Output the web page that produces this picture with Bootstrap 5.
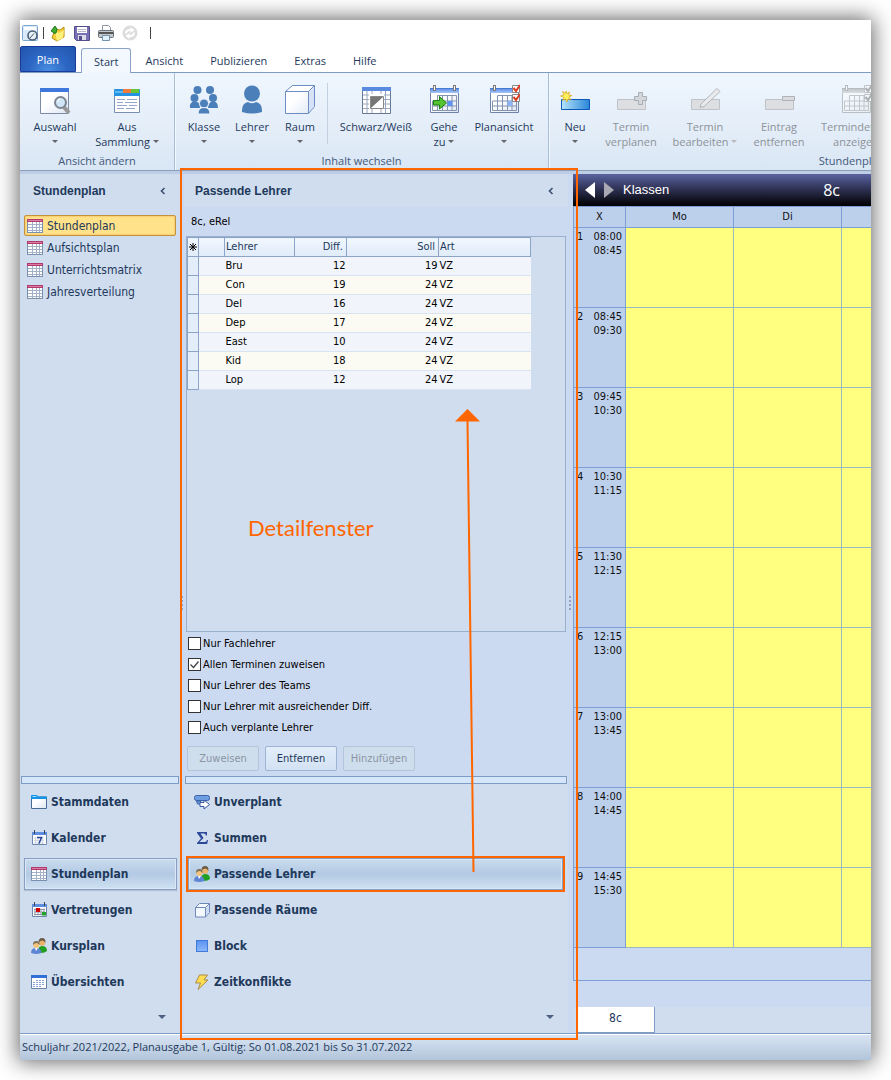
<!DOCTYPE html>
<html lang="de">
<head>
<meta charset="utf-8">
<meta name="viewport" content="width=device-width, initial-scale=1">
<title>Stundenplan – Passende Lehrer</title>
<link href="https://cdn.jsdelivr.net/npm/bootstrap@5.3.0/dist/css/bootstrap.min.css" rel="stylesheet">
<style>
:root{--ink:#1e395b;--panel:#d0ddee;--back:#ccdaf1;--edge:#7f9cc4;--mark-line:#ff6600;
  --ui:"DejaVu Sans Condensed","DejaVu Sans",sans-serif;--ribbon:"Open Sans","Noto Sans",sans-serif}
body{background:#fff;padding:20px;color:var(--ink);font-family:var(--ui);font-size:11px;line-height:14px}
button,a{color:inherit;text-decoration:none}
.app-window{min-height:calc(100vh - 40px);box-shadow:0 0 20px 2px rgba(0,0,0,.6);background:var(--back);overflow:hidden}
svg{display:block;flex:none}
/* quick access bar */
.quickbar{height:26px;padding:0 2px;gap:7px;background:#fff}
.quickbar button{border:0;background:none;padding:0;width:17px;height:17px}
.quickbar .tick{width:1px;height:12px;background:#444}
.quickbar .tick.near{margin:0 -1px 0 -3px}
.quickbar .tick.far{margin-left:4px}
/* ribbon tabs */
.tabstrip{height:27px;background:#fff;border-bottom:1px solid #7c9cc3;font-family:var(--ribbon);font-size:11px;gap:1px}
.tabstrip .tab-link{padding:7px 13px 4px;border:0;background:none;line-height:16px;height:25px;display:flex;align-items:center}
.tabstrip .tab-file{width:56px;height:26px;padding:2px 0 0;margin:0 4px 0 0;color:#fff;text-align:center;border:1px solid #173c9b;border-radius:2px 2px 0 0;
  background:radial-gradient(ellipse at 50% 100%,#4a90e2 0,#2c66c4 50%,#2355ad 100%)}
.tabstrip .tab-link.active{background:#f3f8fe;border:1px solid #8ba5c9;border-bottom:0;border-radius:3px 3px 0 0;padding:6px 12px 5px;height:25px;margin-bottom:-1px}
/* ribbon */
.ribbon{height:98px;background:linear-gradient(#eff6fe,#e3edf8 60%,#d9e6f4);font-family:var(--ribbon);font-size:11px;border-bottom:1px solid #879fbd;overflow:hidden}
.ribbon-group{border-right:1px solid #a7bcd6;box-shadow:1px 0 #f4f9ff;padding:10px 5px 0;flex:none}
.ribbon-group.first{width:155px}
.ribbon-group.middle{width:374px}
.ribbon-group.wide{padding-left:2px;width:668px}
.ribbon-btn{border:0;background:none;padding:0;line-height:15px;width:48px;height:67px;flex:none}
.ribbon-btn svg{margin:0 auto 3px}
.ribbon-btn:disabled{color:#8d9299}
.ribbon-btn.w60{width:60px}.ribbon-btn.w84{width:84px}.ribbon-btn.w90{width:90px}.ribbon-btn.w46{width:46px}.ribbon-btn.w74{width:74px}
.ribbon-btn.w64{width:64px}
.ribbon-sep{width:1px;height:61px;background:#c3d0e0;margin:0 3px}
.group-label{text-align:center;line-height:16px;color:#41597c;margin-top:3px}
.caret{display:inline-block;border:3px solid transparent;border-top-color:#666;border-bottom:0;vertical-align:3px}
:disabled .caret{border-top-color:#bbb}
.main-area{border-top:3px solid #bccde4}
/* side columns */
.nav-col{width:160px;background:var(--panel);flex:none}
.detail-col{width:384px;background:var(--back);flex:none;position:relative}
.panel-head{height:33px;font:bold 12px/16px "Liberation Sans",Arial,sans-serif;padding:0 13px 0 11px;background:var(--panel)}
.nav-col .panel-head{padding-left:13px}
.panel-head button{border:0;background:none;padding:0}
.splitter{width:5px;flex:none;background:var(--back);position:relative}
.splitter.slim{width:4px}
.grip{width:2px;height:14px;background:repeating-linear-gradient(#8fa3c0 0 2px,transparent 2px 4px);position:absolute;left:1px;top:422px}
.view-link{height:22px;font-size:12px;line-height:16px;padding:0 2px;gap:4px;border:1px solid transparent;border-radius:2px}
.view-link.active{background:#ffe28a;border-color:#c5923c;box-shadow:inset 0 0 2px #e9a94a;height:21px;margin-bottom:1px}
.bar{height:8px;border:1px solid var(--edge);background:#d5e6fa;flex:none;margin:0 1px}
.area-link{height:32px;margin:0 3px 0 4px;padding:0 6px;gap:4px;font-size:12px;line-height:16px;font-weight:700;border:1px solid transparent}
.area-list{gap:4px;padding:2px 0}
.area-link.active{border-color:#86a0c4;box-shadow:inset 0 0 0 1px #d9e7f6,0 1px 1px #b4c2d6;background:linear-gradient(#c9dbee,#b3cae4 50%,#cfe1f2)}
.detail-areas{background:var(--panel)}
.detail-areas .area-link{margin-left:4px;margin-right:5px;padding-left:5px}
.detail-areas .area-link.active{outline:2px solid var(--mark-line)}
.area-foot{height:33px;padding:12px 14px 0}
.area-foot .caret{border-width:4px 4px 0;border-top-color:#4c5f80}
/* teacher table */
.lesson{height:29px;color:#000;padding:8px 7px 0}
.list-box{margin:0 2px;border:1px solid #9bb0cd;background:var(--panel)}
.teachers{width:344px;table-layout:fixed;border-collapse:collapse;color:#000}
.teachers th{height:19px;padding:0 1px;font-weight:400;color:var(--ink);background:linear-gradient(#f1f7fe,#dfebf9);border:1px solid #8ba4c8}
.teachers td{height:19px;padding:0 1px;background:#f1f5fb;border-bottom:1px solid #d8e4f2}
.teachers tr:nth-child(even) td{background:#fbfbf3}
.teachers tr td:first-child{background:#e4eefa;border:1px solid #8ba4c8}
.teachers .star{color:#000;text-align:center;padding:0}
.teachers .num{text-align:right}
.teachers th.num{padding-right:3px}
.options{padding:1px 4px 0;color:#000}
.options .form-check{min-height:0;height:21px;padding:0;margin:0;gap:2px}
.options .form-check-input{width:13px;height:13px;margin:0;float:none;border:1px solid #333;border-radius:0;background-color:#fff}
.options .form-check-input:checked{background-color:#fff;background-image:url("data:image/svg+xml,%3Csvg xmlns='http://www.w3.org/2000/svg' viewBox='0 0 11 11'%3E%3Cpath d='M1.5 5.5l3 3 5-6' fill='none' stroke='%23444' stroke-width='1.3'/%3E%3C/svg%3E")}
.actions{padding:8px 3px 5px;gap:6px}
.actions .btn{width:72px;height:25px;padding:0;font-size:11px;line-height:14px;color:var(--ink);border:1px solid #9fb4d2;border-radius:2px;background:linear-gradient(#e3eefa,#d2e1f3)}
.actions .btn:disabled{color:#8b95a3;border-color:#b4c5da;background:#cfdeed;opacity:1}
/* call-outs drawn over the window */
.callout-frame{position:absolute;inset:-6px -10px -7px -4px;border:2px solid var(--mark-line);pointer-events:none;z-index:3}
.callout-text{position:absolute;left:64px;top:340px;font:22px/28px Lato,"Open Sans",sans-serif;color:var(--mark-line)}
.callout-arrow{position:absolute;left:271px;top:235px;z-index:3;pointer-events:none}
/* timetable */
.plan-col{min-width:0;overflow:hidden}
.plan-head{height:32px;background:linear-gradient(#5a64a2,#35395f 40%,#000);color:#fff;font:13px/16px "Liberation Sans",Arial,sans-serif;padding:0 12px}
.plan-head button{border:0;background:none;padding:0;width:19px}
.plan-head .class-name{font:16px/20px var(--ribbon);margin-left:auto;margin-right:19px}
.plan-box{border:1px solid #7d9fd6;border-width:0 0 1px 1px;overflow:hidden;padding-bottom:32px}
.plan{width:592px;table-layout:fixed;border-collapse:separate;border-spacing:0;color:#111}
.plan th{font-weight:400;padding:0;background:#bdd0eb}
.plan thead th{height:22px;text-align:center;border:1px solid #7d9fd6;border-width:1px 1px 1px 0}
.plan tbody th{height:80px;vertical-align:top;padding:2px 3px 0;border:1px solid #7d9fd6;border-width:0 1px 1px 0}
.plan tbody td{background:#ffff80;border:1px solid #9db8c0;border-width:0 1px 1px 0}
.sheets{height:26px;background:var(--panel);margin-top:auto}
.sheets button{width:78px;height:26px;margin-left:4px;border:1px solid #7f9cc4;border-width:0 1px 1px 0;background:#fff;font-size:12px;padding:0 0 4px}
.statusbar{height:27px;border-top:1px solid #7f9cc4;box-shadow:inset 0 1px #fff;background:linear-gradient(#d9e5f3,#b2c5db);font:11px/26px var(--ribbon);padding:0 2px}
</style>
</head>
<body>
<svg width="0" height="0" class="position-absolute" aria-hidden="true">
  <defs>
    <linearGradient id="gBlue" x1="0" y1="0" x2="1" y2="0"><stop offset="0" stop-color="#b5e4fb"/><stop offset="1" stop-color="#2a86d8"/></linearGradient>
    <linearGradient id="gPage" x1="0" y1="0" x2="1" y2="1"><stop offset=".4" stop-color="#fff"/><stop offset="1" stop-color="#dde6f4"/></linearGradient>
    <linearGradient id="gHead" x1="0" y1="0" x2="0" y2="1"><stop offset="0" stop-color="#4f86e6"/><stop offset="1" stop-color="#a9c6f6"/></linearGradient>
    <linearGradient id="gBlock" x1="0" y1="0" x2="0" y2="1"><stop offset="0" stop-color="#5b93f2"/><stop offset="1" stop-color="#8db8fb"/></linearGradient>
  </defs>
  <symbol id="grid-red" viewBox="0 0 16 16"><rect x=".5" y="1.5" width="15" height="13" fill="#fff" stroke="#7b8fae"/><path d="M1 6.500h14M1 9.500h14M1 12.500h14M5.500 4v10M9.500 4v10M12.500 4v10" stroke="#a3b1c8"/><path d="M0 1h16v3H0z" fill="#b03a6c"/><path d="M1 2.500h14" stroke="#db7ba2"/></symbol>
  <symbol id="folder" viewBox="0 0 16 16"><path d="M.5 14.500V2.500q0-1 1-1h4l1 1.500h9v11.500z" fill="url(#gPage)" stroke="#4a6c94"/><path d="M0 5V2q0-1 1-1h5l1 1.500h9V5z" fill="#1593e6"/><path d="M1.500 2.500h4" stroke="#9fdcff"/></symbol>
  <symbol id="cal7" viewBox="0 0 16 16"><path d="M1.500 2.500h14v12h-14z" fill="#fff" stroke="#6d86ab"/><path d="M1 2h15v3H1z" fill="#5d8ee0"/><path d="M3.500 0v4M13.500 0v4" stroke="#444"/><path d="M3 8h10M3 10.500h10M3 13h10M4.500 7v7M7 7v7M11.500 7v7" stroke="#d0d8e4"/><path d="M6 7.500h4.500L8 13.500" fill="none" stroke="#28479a" stroke-width="1.500"/></symbol>
  <symbol id="calred" viewBox="0 0 16 16"><path d="M1.500 2.500h14v12h-14z" fill="#fff" stroke="#6d86ab"/><path d="M1 2h15v3H1z" fill="#5d8ee0"/><path d="M3.500 0v4M13.500 0v4" stroke="#444"/><path d="M3 7.500h11M3 10h11M3 12.500h11M4 6.500v7M7 6.500v7M10 6.500v7M13 6.500v7" stroke="#8a94a6"/><path d="M5 6h4v4H5z" fill="#d40000"/><path d="M11 10h4v3.500h-4z" fill="#1fa52a"/></symbol>
  <symbol id="people" viewBox="0 0 16 16"><path d="M7 14q0-6 4-6 5 0 5 5-2 2-6 2z" fill="#22a022"/><circle cx="11" cy="4.500" r="3.200" fill="#e9b36c"/><path d="M7.600 4.500q-.2-4.500 3.400-4.500 4 0 3.400 5-1-2.500-3-2.500-2 .2-3.800 2z" fill="#6b5a44"/><path d="M0 15q0-5 5-5t5.500 5q-5 2-10.500 0z" fill="#5f86d4"/><path d="M4 10l1 3 2-3z" fill="#fff"/><circle cx="5.300" cy="7" r="3" fill="#f5c27a"/><path d="M2 7Q1.700 3 5.300 3q3.700 0 3.300 4-1.500-2-3.300-2-1.600 0-3.300 2z" fill="#7a705c"/></symbol>
  <symbol id="overview" viewBox="0 0 16 16"><path d="M.5 2.500h15v12H.5z" fill="#fff" stroke="#6b84a6"/><path d="M0 1h16v3H0z" fill="#2f6fd6"/><path d="M5 6.500h9M2 8.500h12M2 10.500h12M2 12.500h8" stroke="#8ba4d8" stroke-dasharray="2 1"/></symbol>
  <symbol id="unplanned" viewBox="0 0 16 16"><rect x=".5" y="1.500" width="15" height="5" rx="2" fill="#6f9ee0" stroke="#3b62a8"/><path d="M2.500 7h4v3h-3z" fill="#6f9ee0" stroke="#3b62a8"/><path d="M6 8.500h4V6l5.500 4.500L10 15v-2.500H6z" fill="#fff" stroke="#3a56a0"/></symbol>
  <symbol id="sigma" viewBox="0 0 16 16"><path d="M3 2h10v3.500h-1Q11.500 3.500 10 3.500H6.500L9.500 8l-4 4H11q1.500 0 2-2h1l-.8 4H3v-1l4-4.500L3 3z" fill="#2d4a9a"/></symbol>
  <symbol id="cube" viewBox="0 0 16 16"><path d="M1.500 5.500l4-4h10v9l-4 4.500h-10z" fill="#f4f8ff" stroke="#6c89ba"/><path d="M1.500 5.500h10v9.500M11.500 5.500l4-4" fill="none" stroke="#6c89ba"/><path d="M12 6l3-3v7l-3 4z" fill="#ccdaf4"/></symbol>
  <symbol id="block" viewBox="0 0 16 16"><rect x="2.500" y="2.500" width="11" height="11" fill="url(#gBlock)" stroke="#4179d8"/></symbol>
  <symbol id="bolt" viewBox="0 0 16 16"><path d="M5.500 1h8L10 6h4L4 15.500 6.500 9H1.500z" fill="#ffdc50" stroke="#a98b4d"/></symbol>
  <symbol id="calbig" viewBox="0 0 32 32"><path d="M2.500 4.500h28v24h-28z" fill="url(#gPage)" stroke="#6f85a8"/><path d="M3 4h28v5H2z" fill="url(#gHead)"/><path d="M2 4.500h29" stroke="#4a7bd4"/><rect x="5.500" y="1.500" width="2" height="5" fill="#fff" stroke="#777"/><rect x="25.500" y="1.500" width="2" height="5" fill="#fff" stroke="#777"/><path d="M4.500 17v9.500h24v-15h-19V26M4.500 17h24M4.500 22h24M14.500 12v14M19.500 12v14M24 12v14" fill="none" stroke="#8493ae"/></symbol>
  <symbol id="checks" viewBox="0 0 32 32"><path d="M24.500 1.500h7v7h-7zM24.500 10.500h7v7h-7z" fill="#fff" stroke="#888"/><path d="M25.500 4l2.500 3 4-6M25.500 13l2.500 3 4-6" fill="none" stroke="#e23b22" stroke-width="2"/></symbol>
  <symbol id="slab" viewBox="0 0 32 32"><path d="M2.500 15.500h28v10h-28z" fill="#dcdee2" stroke="#bfc3c8"/></symbol>
</svg>

<div class="app-window d-flex flex-column">
  <header>
    <div class="quickbar d-flex align-items-center">
      <button aria-label="Vorschau"><svg width="17" height="17" viewBox="0 0 17 17"><rect x=".5" y=".5" width="15" height="15" rx="1" fill="#d9ebfb" stroke="#7ba6d0"/><path d="M2 2h12v3H2z" fill="#fff"/><circle cx="10.500" cy="10.500" r="4.500" fill="#e6f1fb" stroke="#4b5c75" stroke-width="1.600"/><path d="M8 13l4-4.500" stroke="#556"/></svg></button>
      <span class="tick near"></span>
      <button aria-label="Öffnen"><svg width="17" height="17" viewBox="0 0 17 17"><path d="M5 4l5 1 4-3v10l-7 4-5-3z" fill="#f3cf3c" stroke="#b98f14"/><path d="M5 6l4 2 5-3-1 8-6 3z" fill="#fff07c"/><path d="M1 6l4-5 2 3-1 4q-3 1-3-1z" fill="#3daa34" stroke="#23791f"/></svg></button>
      <button aria-label="Speichern"><svg width="17" height="17" viewBox="0 0 17 17"><path d="M.5 1.500h15v14h-13l-2-2z" fill="#7770b4" stroke="#544d8c"/><path d="M3 2h10v6H3z" fill="#fff"/><path d="M4 4.500h8M4 6.500h8" stroke="#b6b6c8"/><path d="M4 10h8v5H4z" fill="#dcdce8"/><path d="M5 11h3v4H5z" fill="#544d8c"/></svg></button>
      <button aria-label="Drucken"><svg width="17" height="17" viewBox="0 0 17 17"><path d="M4.500 6V.5h6l2 2V6" fill="#fff" stroke="#8a94a0"/><rect x=".5" y="5.500" width="15" height="7" rx="1" fill="#c3c8cc" stroke="#6b747c"/><path d="M1 8h14" stroke="#555" stroke-width="2"/><path d="M4.500 10.500h7v5h-7z" fill="#e1f1fc" stroke="#7492aa"/></svg></button>
      <button disabled aria-label="Aktualisieren"><svg width="17" height="17" viewBox="0 0 17 17"><circle cx="8" cy="8" r="7.500" fill="#dcdcdc"/><path d="M4 8.500Q4 5 8 5h1M12 7.500Q12 11 8 11H7" fill="none" stroke="#fff" stroke-width="2"/><path d="M8.500 2l4 3-4 3zM7.500 8l-4 3 4 3z" fill="#fff"/></svg></button>
      <span class="tick far"></span>
    </div>
    <nav class="tabstrip d-flex align-items-end">
      <button class="tab-file">Plan</button>
      <button class="tab-link active">Start</button>
      <button class="tab-link">Ansicht</button>
      <button class="tab-link">Publizieren</button>
      <button class="tab-link">Extras</button>
      <button class="tab-link">Hilfe</button>
    </nav>
    <div class="ribbon d-flex">
      <section class="ribbon-group first">
        <div class="d-flex align-items-start">
          <button class="ribbon-btn w60"><svg width="32" height="32" viewBox="0 0 32 32"><path d="M1.500 4.500h28v25h-28z" fill="url(#gPage)" stroke="#7b8ba4"/><path d="M1 4h29v4H1z" fill="#3f78dc"/><path d="M24 22l6 7" stroke="#999" stroke-width="4"/><circle cx="21.500" cy="18.500" r="5.500" fill="#cfe6f8" stroke="#7d8592" stroke-width="2"/><path d="M18.500 18q.5-3 3-3" stroke="#fff" fill="none"/></svg>Auswahl<br><span class="caret"></span></button>
          <button class="ribbon-btn w84"><svg width="32" height="32" viewBox="0 0 32 32"><path d="M3.500 7.500h25v21h-25z" fill="#fff" stroke="#7890ae"/><path d="M3 12V6q0-1 1-1h24q1 0 1 1v6z" fill="#2593e2"/><path d="M12 5h8v4h-8z" fill="#f07a3c"/><path d="M20 5h8v4h-8z" fill="#68c636"/><path d="M4 8h8" stroke="#9be0ff"/><path d="M6 15.500h8m2 0h10M6 18.500h6m2 0h12M6 21.500h10m2 0h8M6 24.500h7m2 0h9" stroke="#96a7cd"/></svg>Aus<br>Sammlung <span class="caret"></span></button>
        </div>
        <div class="group-label">Ansicht ändern</div>
      </section>
      <section class="ribbon-group middle">
        <div class="d-flex align-items-start">
          <button class="ribbon-btn"><svg width="32" height="32" viewBox="0 0 32 32" fill="#4b7fba"><circle cx="9.500" cy="6" r="4"/><circle cx="22" cy="6" r="4"/><circle cx="6.500" cy="14" r="4"/><circle cx="25" cy="14" r="4"/><path d="M2 24q-1-6 4.500-6.500T12 24zM20 24q0-6 5-6.500T30 24z"/><g stroke="#eaf2fb"><circle cx="16" cy="19.500" r="4.500"/><path d="M10 30q0-6.500 6-6.500t6 6.500z"/></g></svg>Klasse<br><span class="caret"></span></button>
          <button class="ribbon-btn"><svg width="32" height="32" viewBox="0 0 32 32" fill="#4b7fba"><circle cx="16" cy="9.500" r="8"/><path d="M6 28q-.5-9 6-10 4 2.500 8 0 6.500 1 6 10-10 3-20 0z"/></svg>Lehrer<br><span class="caret"></span></button>
          <button class="ribbon-btn"><svg width="32" height="32" viewBox="0 0 32 32"><path d="M1.500 7.500l7-6h22v21l-6 7h-23z" fill="url(#gPage)" stroke="#6d8cc4"/><path d="M25 8l5-5v19l-5 6z" fill="#d6e2f8"/><path d="M1.500 7.500h23v22M24.500 7.500l6-6" fill="none" stroke="#6d8cc4"/></svg>Raum<br><span class="caret"></span></button>
          <span class="ribbon-sep"></span>
          <button class="ribbon-btn w90"><svg width="32" height="32" viewBox="0 0 32 32"><path d="M2.500 3.500h28v26h-28z" fill="#fff" stroke="#667a98"/><path d="M2 3h29v4H2z" fill="#5a8ae0"/><path d="M3 11h27M3 15.500h27M3 20h27M3 24.500h27M7 7v22M12 7v22M21 7v22M25.500 7v22" stroke="#9aa8bd"/><path d="M9 10h15v15H9z" fill="#fff"/><path d="M10.500 12.500h13v12h-13z" fill="#fff" stroke="#888"/><path d="M11 13h12L11 24z" fill="#777"/></svg>Schwarz/Weiß<br>&nbsp;</button>
          <button class="ribbon-btn w46"><svg width="32" height="32" viewBox="0 0 32 32"><use href="#calbig"/><path d="M19.500 17h5v5h-5z" fill="#5d93ee"/><path d="M5.500 16.500h6v-4l7 6.500-7 6v-4h-6z" fill="#53c42f" stroke="#1d7d16"/></svg>Gehe<br>zu <span class="caret"></span></button>
          <button class="ribbon-btn w74"><svg width="32" height="32" viewBox="0 0 32 32"><use href="#calbig"/><path d="M19.500 17h5v5h-5z" fill="#8db4f4"/><use href="#checks"/></svg>Planansicht<br><span class="caret"></span></button>
        </div>
        <div class="group-label">Inhalt wechseln</div>
      </section>
      <section class="ribbon-group wide">
        <div class="d-flex align-items-start">
          <button class="ribbon-btn"><svg width="32" height="32" viewBox="0 0 32 32"><path d="M2.500 15.500h28v10h-28z" fill="url(#gBlue)" stroke="#0c58b8"/><path d="M7 7l.8 2.700L10.500 8l-1 3 3.500.5-3 1.500 2 3-3-1-1 3-1.500-3-3 1.500L5 13.500 1.500 12 5 11 3.500 7.500 6.300 9.300z" fill="#fff25a" stroke="#d9a21c" stroke-width=".7"/></svg>Neu<br><span class="caret"></span></button>
          <button class="ribbon-btn w64" disabled><svg width="32" height="32" viewBox="0 0 32 32"><use href="#slab"/><path d="M23.500 8.500h4v4h4v4h-4v4h-4v-4h-4v-4h4z" fill="#d3d6da" stroke="#a9aeb4"/></svg>Termin<br>verplanen</button>
          <button class="ribbon-btn w84" disabled><svg width="32" height="32" viewBox="0 0 32 32"><use href="#slab"/><path d="M12 20L28 4.500l3 3L15 22.500l-4 1z" fill="#e9eaec" stroke="#b1b5ba"/></svg>Termin<br>bearbeiten <span class="caret"></span></button>
          <button class="ribbon-btn w64" disabled><svg width="32" height="32" viewBox="0 0 32 32"><use href="#slab"/><path d="M19.500 12.500h12v4h-12z" fill="#d9dbde" stroke="#aeb2b7"/></svg>Eintrag<br>entfernen</button>
          <button class="ribbon-btn w90" disabled><svg width="32" height="32" viewBox="0 0 32 32" style="filter:grayscale(1) opacity(.45)"><use href="#calbig"/><use href="#checks"/></svg>Termindetails<br>anzeigen</button>
        </div>
        <div class="group-label">Stundenplan bearbeiten</div>
      </section>
    </div>
  </header>

  <main class="main-area d-flex flex-grow-1">
    <aside class="nav-col d-flex flex-column">
      <div class="panel-head d-flex align-items-center justify-content-between"><span>Stundenplan</span><button aria-label="Einklappen"><svg width="8" height="8" viewBox="0 0 8 8"><path d="M5.500 1L2.500 4l3 3" fill="none" stroke="#3c4f70" stroke-width="1.600"/></svg></button></div>
      <nav class="flex-grow-1 px-1 pt-2">
        <a href="#" class="view-link active d-flex align-items-center"><svg width="16" height="16"><use href="#grid-red"/></svg>Stundenplan</a>
        <a href="#" class="view-link d-flex align-items-center"><svg width="16" height="16"><use href="#grid-red"/></svg>Aufsichtsplan</a>
        <a href="#" class="view-link d-flex align-items-center"><svg width="16" height="16"><use href="#grid-red"/></svg>Unterrichtsmatrix</a>
        <a href="#" class="view-link d-flex align-items-center"><svg width="16" height="16"><use href="#grid-red"/></svg>Jahresverteilung</a>
      </nav>
      <div class="bar"></div>
      <nav class="area-list d-flex flex-column">
        <a href="#" class="area-link d-flex align-items-center"><svg width="16" height="16"><use href="#folder"/></svg>Stammdaten</a>
        <a href="#" class="area-link d-flex align-items-center"><svg width="16" height="16"><use href="#cal7"/></svg>Kalender</a>
        <a href="#" class="area-link active d-flex align-items-center"><svg width="16" height="16"><use href="#grid-red"/></svg>Stundenplan</a>
        <a href="#" class="area-link d-flex align-items-center"><svg width="16" height="16"><use href="#calred"/></svg>Vertretungen</a>
        <a href="#" class="area-link d-flex align-items-center"><svg width="16" height="16"><use href="#people"/></svg>Kursplan</a>
        <a href="#" class="area-link d-flex align-items-center"><svg width="16" height="16"><use href="#overview"/></svg>Übersichten</a>
      </nav>
      <div class="area-foot d-flex justify-content-end"><span><span class="caret"></span></span></div>
    </aside>
    <div class="splitter slim"><span class="grip"></span></div>

    <section class="detail-col d-flex flex-column">
      <div class="panel-head d-flex align-items-center justify-content-between"><span>Passende Lehrer</span><button aria-label="Einklappen"><svg width="8" height="8" viewBox="0 0 8 8"><path d="M5.500 1L2.500 4l3 3" fill="none" stroke="#3c4f70" stroke-width="1.600"/></svg></button></div>
      <div class="lesson">8c, eRel</div>
      <div class="list-box flex-grow-1">
        <table class="teachers">
          <colgroup><col style="width:11px"><col style="width:26px"><col style="width:70px"><col style="width:52px"><col style="width:92px"><col></colgroup>
          <thead><tr><th class="star"><svg class="mx-auto" width="8" height="8" viewBox="0 0 8 8"><path d="M4 0v8M0 4h8M1 1l6 6M7 1L1 7" stroke="#000"/></svg></th><th></th><th>Lehrer</th><th class="num">Diff.</th><th class="num">Soll</th><th>Art</th></tr></thead>
          <tbody>
            <tr><td></td><td></td><td>Bru</td><td class="num">12</td><td class="num">19</td><td>VZ</td></tr>
            <tr><td></td><td></td><td>Con</td><td class="num">19</td><td class="num">24</td><td>VZ</td></tr>
            <tr><td></td><td></td><td>Del</td><td class="num">16</td><td class="num">24</td><td>VZ</td></tr>
            <tr><td></td><td></td><td>Dep</td><td class="num">17</td><td class="num">24</td><td>VZ</td></tr>
            <tr><td></td><td></td><td>East</td><td class="num">10</td><td class="num">24</td><td>VZ</td></tr>
            <tr><td></td><td></td><td>Kid</td><td class="num">18</td><td class="num">24</td><td>VZ</td></tr>
            <tr><td></td><td></td><td>Lop</td><td class="num">12</td><td class="num">24</td><td>VZ</td></tr>
          </tbody>
        </table>
      </div>
      <div class="options">
        <div class="form-check d-flex align-items-center"><input class="form-check-input" type="checkbox" id="o1"><label for="o1">Nur Fachlehrer</label></div>
        <div class="form-check d-flex align-items-center"><input class="form-check-input" type="checkbox" id="o2" checked><label for="o2">Allen Terminen zuweisen</label></div>
        <div class="form-check d-flex align-items-center"><input class="form-check-input" type="checkbox" id="o3"><label for="o3">Nur Lehrer des Teams</label></div>
        <div class="form-check d-flex align-items-center"><input class="form-check-input" type="checkbox" id="o4"><label for="o4">Nur Lehrer mit ausreichender Diff.</label></div>
        <div class="form-check d-flex align-items-center"><input class="form-check-input" type="checkbox" id="o5"><label for="o5">Auch verplante Lehrer</label></div>
      </div>
      <div class="actions d-flex">
        <button class="btn" disabled>Zuweisen</button>
        <button class="btn">Entfernen</button>
        <button class="btn" disabled>Hinzufügen</button>
      </div>
      <div class="detail-areas">
        <div class="bar"></div>
        <nav class="area-list d-flex flex-column">
          <a href="#" class="area-link d-flex align-items-center"><svg width="16" height="16"><use href="#unplanned"/></svg>Unverplant</a>
          <a href="#" class="area-link d-flex align-items-center"><svg width="16" height="16"><use href="#sigma"/></svg>Summen</a>
          <a href="#" class="area-link active d-flex align-items-center"><svg width="16" height="16"><use href="#people"/></svg>Passende Lehrer</a>
          <a href="#" class="area-link d-flex align-items-center"><svg width="16" height="16"><use href="#cube"/></svg>Passende Räume</a>
          <a href="#" class="area-link d-flex align-items-center"><svg width="16" height="16"><use href="#block"/></svg>Block</a>
          <a href="#" class="area-link d-flex align-items-center"><svg width="16" height="16"><use href="#bolt"/></svg>Zeitkonflikte</a>
        </nav>
        <div class="area-foot d-flex justify-content-end"><span><span class="caret"></span></span></div>
      </div>
      <div class="callout-text">Detailfenster</div>
      <svg class="callout-arrow" width="26" height="464" viewBox="0 0 26 464"><path d="M12.500 0L25 12.500H0z" fill="#f60"/><path d="M12.500 12L18.500 463" stroke="#f60" stroke-width="2"/></svg>
      <div class="callout-frame"></div>
    </section>
    <div class="splitter"><span class="grip"></span></div>

    <section class="plan-col d-flex flex-column flex-grow-1">
      <div class="plan-head d-flex align-items-center">
        <button aria-label="Zurück"><svg width="10" height="16" viewBox="0 0 10 16"><path d="M10 0v16L0 8z" fill="#fff"/></svg></button>
        <button aria-label="Weiter"><svg width="10" height="16" viewBox="0 0 10 16"><path d="M0 0v16l10-8z" fill="#a9a9b4"/></svg></button>
        <span>Klassen</span><span class="class-name">8c</span>
      </div>
      <div class="plan-box">
        <table class="plan">
          <colgroup><col style="width:52px"><col><col><col><col><col></colgroup>
          <thead><tr><th>X</th><th>Mo</th><th>Di</th><th>Mi</th><th>Do</th><th>Fr</th></tr></thead>
          <tbody>
            <tr><th><div class="d-flex justify-content-between"><span>1</span><span>08:00<br>08:45</span></div></th><td></td><td></td><td></td><td></td><td></td></tr>
            <tr><th><div class="d-flex justify-content-between"><span>2</span><span>08:45<br>09:30</span></div></th><td></td><td></td><td></td><td></td><td></td></tr>
            <tr><th><div class="d-flex justify-content-between"><span>3</span><span>09:45<br>10:30</span></div></th><td></td><td></td><td></td><td></td><td></td></tr>
            <tr><th><div class="d-flex justify-content-between"><span>4</span><span>10:30<br>11:15</span></div></th><td></td><td></td><td></td><td></td><td></td></tr>
            <tr><th><div class="d-flex justify-content-between"><span>5</span><span>11:30<br>12:15</span></div></th><td></td><td></td><td></td><td></td><td></td></tr>
            <tr><th><div class="d-flex justify-content-between"><span>6</span><span>12:15<br>13:00</span></div></th><td></td><td></td><td></td><td></td><td></td></tr>
            <tr><th><div class="d-flex justify-content-between"><span>7</span><span>13:00<br>13:45</span></div></th><td></td><td></td><td></td><td></td><td></td></tr>
            <tr><th><div class="d-flex justify-content-between"><span>8</span><span>14:00<br>14:45</span></div></th><td></td><td></td><td></td><td></td><td></td></tr>
            <tr><th><div class="d-flex justify-content-between"><span>9</span><span>14:45<br>15:30</span></div></th><td></td><td></td><td></td><td></td><td></td></tr>
          </tbody>
        </table>
      </div>
      <div class="sheets"><button>8c</button></div>
    </section>
  </main>
  <footer class="statusbar">Schuljahr 2021/2022, Planausgabe 1, Gültig: So 01.08.2021 bis So 31.07.2022</footer>
</div>
<script src="https://cdn.jsdelivr.net/npm/bootstrap@5.3.0/dist/js/bootstrap.bundle.min.js"></script>
</body>
</html>
